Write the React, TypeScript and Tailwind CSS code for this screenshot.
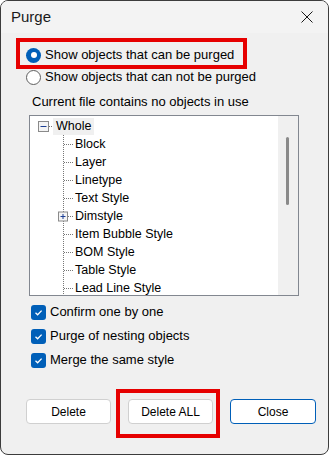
import React from 'react';

const items = [
  'Block',
  'Layer',
  'Linetype',
  'Text Style',
  'Dimstyle',
  'Item Bubble Style',
  'BOM Style',
  'Table Style',
  'Lead Line Style',
];

function Connector({ plus }: { plus?: boolean }) {
  return (
    <svg width="19" height="18" className="shrink-0">
      <line x1="8.5" y1="0" x2="8.5" y2="18" stroke="#777" strokeDasharray="1 1" />
      <line x1="9" y1="9.5" x2="18" y2="9.5" stroke="#777" strokeDasharray="1 1" />
      {plus && (
        <g>
          <rect x="3.5" y="5" width="9" height="9" fill="#f4f4f4" stroke="#8a8a8a" />
          <line x1="5.5" y1="9.5" x2="10.5" y2="9.5" stroke="#1c3f94" />
          <line x1="8" y1="7" x2="8" y2="12" stroke="#1c3f94" />
        </g>
      )}
    </svg>
  );
}

function Check({ label }: { label: string }) {
  return (
    <div className="flex h-[24px] items-center">
      <span className="flex h-[15px] w-[15px] items-center justify-center rounded-[3px] bg-[#005fb8]">
        <svg width="11" height="11" viewBox="0 0 11 11">
          <path d="M2.5 5.8 L4.6 7.8 L8.6 3.6" fill="none" stroke="white" strokeWidth="1.3" />
        </svg>
      </span>
      <span className="ml-[4px]">{label}</span>
    </div>
  );
}

export default function App() {
  return (
    <div
      className="relative flex h-[455px] w-[329px] flex-col overflow-hidden rounded-[8px] border border-[#3c3c3c] bg-[#f0f0f0] text-[13px] text-black"
      style={{ fontFamily: '"Liberation Sans", Arial, sans-serif' }}
    >
      {/* Title bar */}
      <div className="flex h-[32px] shrink-0 items-center justify-between bg-[#f3f3f3] pl-[10px] pr-[15px]">
        <span className="text-[15px] text-[#1a1a1a]">Purge</span>
        <svg width="12" height="12" viewBox="0 0 12 12">
          <path d="M0.5 0.5 L11.5 11.5 M11.5 0.5 L0.5 11.5" stroke="#1a1a1a" strokeWidth="1" />
        </svg>
      </div>

      {/* Radios */}
      <div className="mt-[11px] pl-[25px]">
        <div className="flex h-[22px] items-center">
          <span className="flex h-[15px] w-[15px] items-center justify-center rounded-full bg-[#005fb8]">
            <span className="h-[6px] w-[6px] rounded-full bg-white" />
          </span>
          <span className="ml-[4px]">Show objects that can be purged</span>
        </div>
        <div className="flex h-[22px] items-center">
          <span className="h-[15px] w-[15px] rounded-full border border-[#5f5f5f] bg-white" />
          <span className="ml-[4px]">Show objects that can not be purged</span>
        </div>
      </div>

      <div className="mt-[5px] flex h-[18px] items-center pl-[31px]">
        Current file contains no objects in use
      </div>

      {/* Tree */}
      <div className="ml-[28px] mt-[4px] flex h-[181px] w-[270px] border border-[#828790] bg-white text-[12.5px]">
        <div className="flex-1 overflow-hidden pt-[1px]">
          <div className="flex h-[18px] items-center pl-[8px]">
            <svg width="11" height="11" className="shrink-0">
              <rect x="0.5" y="0.5" width="10" height="10" fill="#f4f4f4" stroke="#8a8a8a" />
              <line x1="2.5" y1="5.5" x2="8.5" y2="5.5" stroke="#1c3f94" />
            </svg>
            <svg width="4" height="18" className="shrink-0">
              <line x1="0" y1="9.5" x2="4" y2="9.5" stroke="#777" strokeDasharray="1 1" />
            </svg>
            <span className="flex h-[17px] items-center bg-[#f0f0f0] px-[3px]">Whole</span>
          </div>
          {items.map((name) => (
            <div key={name} className="flex h-[18px] items-center pl-[25px]">
              <Connector plus={name === 'Dimstyle'} />
              <span className="ml-[1px] whitespace-nowrap">{name}</span>
            </div>
          ))}
        </div>
        <div className="w-[20px] shrink-0 bg-[#f0f0f0] pt-[21px]">
          <div className="ml-[8px] h-[68px] w-[3px] rounded-full bg-[#8a8a8a]" />
        </div>
      </div>

      {/* Checkboxes */}
      <div className="mt-[4px] pl-[30px]">
        <Check label="Confirm one by one" />
        <Check label="Purge of nesting objects" />
        <Check label="Merge the same style" />
      </div>

      {/* Buttons */}
      <div className="mt-[27px] flex gap-[17px] pl-[25px] text-[12px]">
        <button className="h-[25px] w-[85px] rounded-[4px] border border-[#d0d0d0] bg-white">Delete</button>
        <button className="h-[25px] w-[85px] rounded-[4px] border border-[#d0d0d0] bg-white">Delete ALL</button>
        <button className="h-[25px] w-[86px] rounded-[4px] border border-[#005fb8] bg-white">Close</button>
      </div>

      {/* Annotation boxes */}
      <div className="pointer-events-none absolute left-[15px] top-[37px] h-[31px] w-[231px] border-[4px] border-[#e60000]" />
      <div className="pointer-events-none absolute left-[115px] top-[388px] h-[49px] w-[104px] border-[4px] border-[#e60000]" />
    </div>
  );
}
